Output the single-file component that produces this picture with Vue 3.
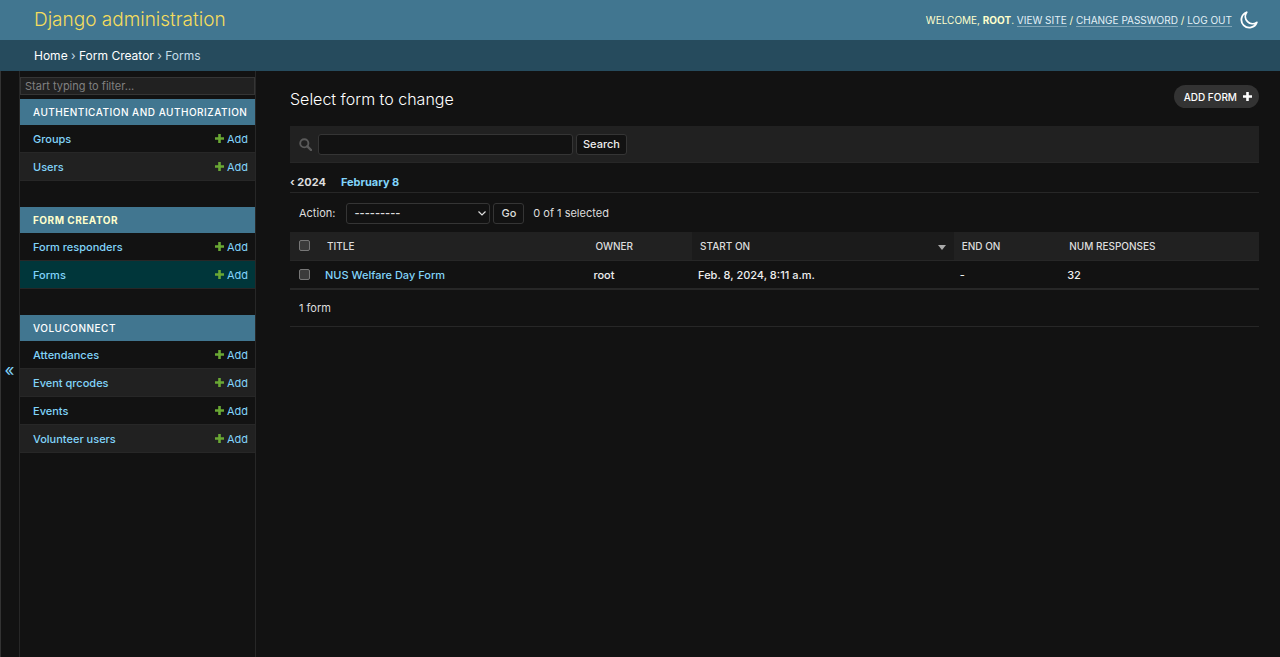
<script setup>
import { ref } from 'vue'

const modules = [
  { name: 'Authentication and Authorization', current: false, models: ['Groups', 'Users'] },
  { name: 'Form Creator', current: true, models: ['Form responders', 'Forms'] },
  { name: 'Voluconnect', current: false, models: ['Attendances', 'Event qrcodes', 'Events', 'Volunteer users'] }
]
const activeModel = 'Forms'

const rows = [
  { title: 'NUS Welfare Day Form', owner: 'root', start: 'Feb. 8, 2024, 8:11 a.m.', end: '-', responses: 32 }
]

const filter = ref('')
const query = ref('')
const action = ref('')
</script>

<template>
  <div class="page">
    <header class="header">
      <a href="#" class="brand">Django administration</a>
      <div class="user-tools">
        <span>Welcome, <strong>root</strong>. <a href="#">View site</a> / <a href="#">Change password</a> / <a href="#">Log out</a></span>
        <button type="button" class="theme" aria-label="Toggle theme">
          <svg viewBox="0 0 24 24" width="19" height="19" fill="none" stroke="currentColor" stroke-width="2.3" stroke-linejoin="round">
            <path d="M8.4 1.6A10 10 0 1 0 21.2 14.4A9.2 9.2 0 0 1 8.4 1.6Z" />
          </svg>
        </button>
      </div>
    </header>

    <nav class="breadcrumbs" aria-label="Breadcrumbs">
      <a href="#">Home</a> › <a href="#">Form Creator</a> › <span>Forms</span>
    </nav>

    <div class="body">
      <button type="button" class="toggle" aria-label="Toggle navigation">«</button>

      <nav class="sidebar" aria-label="Sidebar">
        <input v-model="filter" class="filter" type="search" placeholder="Start typing to filter..." aria-label="Filter navigation items">
        <section v-for="m in modules" :key="m.name" class="module">
          <h2 :class="{ current: m.current }"><a href="#">{{ m.name }}</a></h2>
          <ul>
            <li v-for="model in m.models" :key="model" :class="{ active: model === activeModel }">
              <a href="#" class="model">{{ model }}</a>
              <a href="#" class="add">
                <svg viewBox="0 0 9 9" width="9" height="9" aria-hidden="true"><path d="M3.2 0H5.8V3.2H9V5.8H5.8V9H3.2V5.8H0V3.2H3.2Z" fill="#6aa834" /></svg>
                Add
              </a>
            </li>
          </ul>
        </section>
      </nav>

      <main class="content">
        <div class="title-row">
          <h1>Select form to change</h1>
          <a href="#" class="add-form">
            Add form
            <svg viewBox="0 0 9 9" width="9" height="9" aria-hidden="true"><path d="M3.2 0H5.8V3.2H9V5.8H5.8V9H3.2V5.8H0V3.2H3.2Z" fill="#fff" /></svg>
          </a>
        </div>

        <form class="search" @submit.prevent>
          <label for="searchbar" aria-label="Search">
            <svg viewBox="0 0 13 13" width="13" height="13" fill="none" stroke="#5a5a5a" aria-hidden="true">
              <circle cx="5.3" cy="5.3" r="4.1" stroke-width="1.9" />
              <path d="M8.4 8.4L12 12" stroke-width="2.4" stroke-linecap="round" />
            </svg>
          </label>
          <input id="searchbar" v-model="query" type="text">
          <button type="submit">Search</button>
        </form>

        <nav class="dates" aria-label="Date drill-down">
          <a href="#" class="back">‹ 2024</a>
          <a href="#">February 8</a>
        </nav>

        <div class="actions">
          <label for="action">Action:</label>
          <span class="select">
            <select id="action" v-model="action">
              <option value="">---------</option>
              <option value="delete">Delete selected forms</option>
            </select>
            <svg viewBox="0 0 8 5" width="8" height="5" fill="none" stroke="#ddd" stroke-width="1.2" aria-hidden="true"><path d="M0.5 0.5L4 4L7.5 0.5" /></svg>
          </span>
          <button type="button">Go</button>
          <span class="count">0 of 1 selected</span>
        </div>

        <table>
          <colgroup>
            <col class="c-check"><col class="c-title"><col class="c-owner"><col class="c-start"><col class="c-end"><col>
          </colgroup>
          <thead>
            <tr>
              <th class="check"><input type="checkbox" aria-label="Select all"></th>
              <th>Title</th>
              <th>Owner</th>
              <th class="sorted"><div>Start on <svg viewBox="0 0 8 5" width="8" height="5" aria-hidden="true"><path d="M0 0H8L4 5Z" fill="#aaa" /></svg></div></th>
              <th>End on</th>
              <th>Num responses</th>
            </tr>
          </thead>
          <tbody>
            <tr v-for="row in rows" :key="row.title">
              <td class="check"><input type="checkbox" :aria-label="'Select ' + row.title"></td>
              <td><a href="#">{{ row.title }}</a></td>
              <td>{{ row.owner }}</td>
              <td>{{ row.start }}</td>
              <td>{{ row.end }}</td>
              <td>{{ row.responses }}</td>
            </tr>
          </tbody>
        </table>

        <p class="paginator">1 form</p>
      </main>
    </div>
  </div>
</template>

<style>
body {
  background: #121212;
}
</style>

<style scoped>
* {
  box-sizing: border-box;
}
.page {
  display: flex;
  flex-direction: column;
  min-height: 100vh;
  background: #121212;
  color: #eee;
  font: 11px/16px Inter, "Liberation Sans", sans-serif;
  box-shadow: inset 1px 0 #333;
}
a {
  color: #81d4fa;
  text-decoration: none;
}
button,
input,
select {
  font: inherit;
  color: inherit;
  margin: 0;
}
h1,
h2,
p,
ul {
  margin: 0;
  padding: 0;
}
.header {
  display: flex;
  align-items: center;
  justify-content: space-between;
  height: 40px;
  padding: 0 21px 0 34px;
  background: #417690;
}
.brand {
  color: #f5dd5d;
  font-size: 19px;
  font-weight: 300;
  line-height: 24px;
}
.user-tools {
  display: flex;
  align-items: center;
  gap: 8px;
  color: #ffc;
  font-size: 10px;
  text-transform: uppercase;
}
.user-tools a {
  color: #e4f1f7;
  border-bottom: 1px solid #82a6b7;
}
.theme {
  display: flex;
  padding: 0;
  border: 0;
  background: none;
  color: #fff;
}
.breadcrumbs {
  height: 31px;
  padding: 0 34px;
  background: #264b5d;
  color: #c4dce8;
  line-height: 32px;
  font-size: 12px;
}
.breadcrumbs a {
  color: #fff;
}
.body {
  flex: 1;
  display: flex;
}
.toggle {
  width: 20px;
  padding: 12px 0 0;
  border: 0;
  border-right: 1px solid #272727;
  background: none;
  color: #81d4fa;
  font-size: 17px;
}
.sidebar {
  width: 236px;
  padding-top: 6px;
  border-right: 1px solid #272727;
}
.filter {
  display: block;
  width: 100%;
  height: 18px;
  margin-bottom: 4px;
  padding: 0 4px;
  border: 1px solid #353535;
  border-radius: 0;
  background: #212121;
  appearance: none;
}
.filter::placeholder {
  color: #808080;
}
.module {
  margin-bottom: 26px;
}
.module h2 {
  height: 26px;
  padding-left: 13px;
  background: #417690;
  font-size: 10px;
  font-weight: 500;
  line-height: 26px;
  letter-spacing: 0.05em;
  text-transform: uppercase;
  white-space: nowrap;
}
.module h2 a {
  color: #fff;
}
.module h2.current {
  font-weight: 700;
}
.module h2.current a {
  color: #ffc;
}
ul {
  list-style: none;
}
li {
  display: flex;
  align-items: center;
  justify-content: space-between;
  height: 28px;
  padding: 0 7px 0 13px;
  border-bottom: 1px solid #272727;
}
li:nth-child(even) {
  background: #212121;
}
li.active {
  background: #00363a;
}
.model {
  font-weight: 500;
}
.add {
  display: flex;
  align-items: center;
  gap: 3px;
}
.content {
  flex: 1;
  min-width: 0;
  padding: 14px 21px 0 34px;
}
.title-row {
  display: flex;
  justify-content: space-between;
  align-items: flex-start;
  height: 41px;
}
h1 {
  padding-top: 3px;
  color: #fff;
  font-size: 16px;
  font-weight: 300;
  line-height: 22px;
}
.add-form {
  display: flex;
  align-items: center;
  gap: 6px;
  height: 23px;
  padding: 0 7px 0 10px;
  border-radius: 12px;
  background: #333;
  color: #fff;
  font-size: 10px;
  font-weight: 500;
  text-transform: uppercase;
}
.search {
  display: flex;
  align-items: center;
  height: 37px;
  padding: 0 9px;
  border-bottom: 1px solid #272727;
  background: #212121;
}
.search label {
  display: flex;
  margin-right: 6px;
}
.search input,
.search button,
.actions button,
.select select {
  height: 21px;
  border: 1px solid #353535;
  border-radius: 3px;
  background: #121212;
}
.search input {
  width: 255px;
  margin-right: 3px;
  padding: 0 5px;
}
.search button,
.actions button {
  padding: 0 6px;
  font-weight: 500;
}
.actions button {
  padding: 0 7px;
}
.dates {
  display: flex;
  gap: 15px;
  height: 30px;
  padding-top: 11px;
  border-bottom: 1px solid #272727;
  font-weight: 700;
}
.dates .back {
  color: #ddd;
}
.actions {
  display: flex;
  align-items: center;
  height: 39px;
  padding: 1px 9px 0;
  color: #ddd;
}
.actions label {
  margin-right: 11px;
}
.select {
  position: relative;
  display: flex;
  margin-right: 3px;
}
.select select {
  width: 144px;
  padding: 0 7px;
  font-weight: 600;
  appearance: none;
}
.select svg {
  position: absolute;
  right: 4px;
  top: 8px;
  pointer-events: none;
}
.count {
  margin-left: 9px;
}
table {
  width: 100%;
  border-collapse: collapse;
  table-layout: fixed;
}
.c-check {
  width: 29px;
}
.c-title {
  width: 27.7%;
}
.c-owner {
  width: 10.8%;
}
.c-start {
  width: 27%;
}
.c-end {
  width: 11.1%;
}
th,
td {
  height: 28px;
  padding: 0 6px;
  border-bottom: 1px solid #272727;
  text-align: left;
  font-weight: 500;
  vertical-align: middle;
}
td {
  padding-top: 1px;
}
th {
  padding: 0 8px;
  background: #212121;
  color: #ddd;
  font-size: 10px;
  text-transform: uppercase;
}
.sorted {
  background: #1b1b1b;
}
.sorted div {
  display: flex;
  align-items: center;
  justify-content: space-between;
}
.sorted svg {
  margin-top: 4px;
}
.check {
  padding: 0 9px;
}
.check input {
  display: block;
  width: 11px;
  height: 11px;
  border: 1px solid #777;
  border-radius: 2px;
  background: #3b3b3b;
  appearance: none;
}
.paginator {
  padding: 10px 9px;
  border-top: 1px solid #272727;
  border-bottom: 1px solid #272727;
  color: #ddd;
}
</style>
